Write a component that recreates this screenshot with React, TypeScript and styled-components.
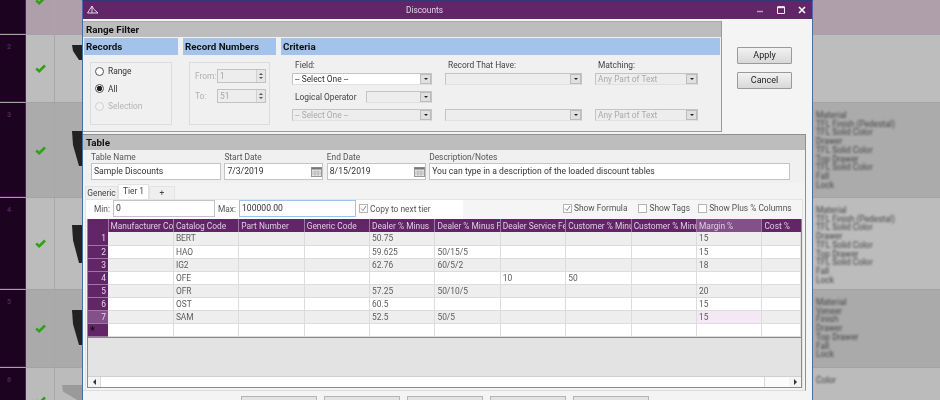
import * as React from "react";
import styled, { createGlobalStyle } from "styled-components";

const Global = createGlobalStyle`
    html, body {
        margin: 0;
        padding: 0;
        width: 940px;
        height: 400px;
        overflow: hidden;
        background: #b5b5b5;
    }
    * {
        box-sizing: border-box;
    }
`;

const font = `Roboto, "Noto Sans", "Liberation Sans", sans-serif`;

/* the app behind the dialog */
const Desktop = styled.div`
    position: relative;
    width: 940px;
    height: 400px;
    overflow: hidden;
    font-family: ${font};
`;

const Backdrop = styled.div`
    display: flex;
    flex-direction: column;
    margin-top: -34px;
    filter: blur(0.7px);
`;

const BgRow = styled.div<{ $h: number; $tone: string }>`
    display: grid;
    grid-template-columns: 26px 29px 27px 734px 1fr;
    height: ${(p) => p.$h}px;
    flex: none;
    background: ${(p) => p.$tone};
    border-bottom: 1px solid #a3a3a3;
`;

const BgNumber = styled.div`
    background: #1c0420;
    border-right: 1px solid #4a1f52;
    border-bottom: 1px solid #3c1444;
    color: #4e2558;
    font-size: 7px;
    font-weight: 700;
    padding: 8px 0 0 7px;
`;

const BgCheck = styled.div`
    display: flex;
    align-items: center;
    justify-content: center;
    border-right: 1px solid #a8a8a8;
`;

const BgThumb = styled.div<{ $top: number }>`
    display: flex;
    justify-content: flex-end;
    align-items: flex-start;
    padding-top: ${(p) => p.$top}px;
`;

const BgText = styled.div`
    grid-column: 5;
    padding: 8px 0 0 0;
    color: #444;
    font-size: 8.4px;
    line-height: 8.7px;
    filter: blur(0.9px);
`;

const Spacer = styled.div``;

/* dialog window */
const Dialog = styled.div`
    position: absolute;
    left: 82px;
    top: 0;
    width: 731px;
    height: 400px;
    overflow: hidden;
    display: flex;
    flex-direction: column;
    background: #f4f4f4;
    border-left: 1px solid #4c6da3;
    border-right: 1px solid #4c6da3;
    border-top: 1px solid #2c3a7c;
    filter: blur(0.35px);
`;

const TitleBar = styled.div`
    position: relative;
    flex: none;
    height: 18px;
    background: #622568;
    color: #e2d6e4;
    font-size: 8.3px;
    display: flex;
    align-items: center;
    justify-content: center;
    padding-right: 46px;
`;

const TitleLogo = styled.svg`
    position: absolute;
    left: 4px;
    top: 4px;
`;

const WindowControls = styled.div`
    position: absolute;
    right: 6px;
    top: 5px;
    display: flex;
    gap: 13px;
    align-items: center;
`;

const Body = styled.div`
    flex: 1;
    display: flex;
    flex-direction: column;
    padding-top: 1px;
    border-top: 1px solid #fff;
`;

const TopArea = styled.div`
    display: flex;
    flex: none;
`;

const RangePanel = styled.div`
    width: 639px;
    height: 111px;
    display: flex;
    flex-direction: column;
    border: 1px solid #9a9a9a;
    border-left: none;
    border-top-color: #a8a8a8;
    background: #f0f0f0;
`;

const PanelHeading = styled.div`
    flex: none;
    height: 15px;
    padding-left: 3px;
    background: #bdbdbd;
    color: #111;
    font-size: 9.8px;
    font-weight: 700;
    line-height: 15px;
`;

const RangeColumns = styled.div`
    flex: 1;
    display: grid;
    grid-template-columns: 94px 93px 1fr;
    gap: 5px;
    padding: 1px 1px 0 1px;
`;

const Section = styled.div`
    display: flex;
    flex-direction: column;
    min-width: 0;
`;

const SectionHead = styled.div`
    flex: none;
    height: 17px;
    padding-left: 2px;
    background: #a3c3ea;
    color: #111;
    font-size: 9.8px;
    font-weight: 700;
    line-height: 17px;
`;

const FieldSet = styled.div`
    margin: 7px 6px 0;
    height: 63px;
    border: 1px solid #dcdcdc;
    display: flex;
    flex-direction: column;
`;

const RadioList = styled(FieldSet)`
    padding: 2px 0 0 4px;
    gap: 5.5px;
`;

const RadioRow = styled.div<{ $off?: boolean }>`
    display: flex;
    align-items: center;
    gap: 4px;
    height: 12px;
    font-size: 8.4px;
    color: ${(p) => (p.$off ? "#b5b5b5" : "#333")};
`;

const Radio = styled.span<{ $on?: boolean; $off?: boolean }>`
    width: 9px;
    height: 9px;
    border-radius: 50%;
    flex: none;
    border: 1px solid ${(p) => (p.$off ? "#d0d0d0" : "#555")};
    background: ${(p) =>
        p.$on
            ? "radial-gradient(circle, #222 0 2.4px, #fff 3px)"
            : p.$off
            ? "#f2f2f2"
            : "#fff"};
`;

const SpinList = styled(FieldSet)`
    padding: 6px 0 0 5px;
    gap: 6px;
`;

const SpinRow = styled.div`
    display: flex;
    align-items: center;
    height: 14px;
    color: #b0b0b0;
    font-size: 8.4px;
`;

const SpinLabel = styled.span`
    width: 22px;
`;

const SpinBox = styled.div`
    width: 49px;
    height: 14px;
    border: 1px solid #c2c2c2;
    background: #ededed;
    color: #a8a8a8;
    font-size: 8.4px;
    line-height: 12px;
    padding-left: 2px;
    display: flex;
    justify-content: space-between;
`;

const SpinArrows = styled.div`
    width: 9px;
    display: flex;
    flex-direction: column;
    align-items: center;
    justify-content: center;
    gap: 2px;
    background: #e6e6e6;
    border-left: 1px solid #d0d0d0;
`;

const Arrow = styled.span<{ $dir: "up" | "down" | "left" | "right"; $c?: string }>`
    width: 0;
    height: 0;
    border-style: solid;
    border-color: transparent;
    ${(p) =>
        p.$dir === "up"
            ? `border-width: 0 2px 2px; border-bottom-color: ${p.$c || "#555"};`
            : p.$dir === "down"
            ? `border-width: 2px 2px 0; border-top-color: ${p.$c || "#555"};`
            : p.$dir === "left"
            ? `border-width: 3px 3px 3px 0; border-right-color: ${p.$c || "#333"};`
            : `border-width: 3px 0 3px 3px; border-left-color: ${p.$c || "#333"};`}
`;

const CriteriaGrid = styled.div`
    display: grid;
    grid-template-columns: 140px 137px 103px;
    column-gap: 13px;
    row-gap: 6px;
    padding: 4px 0 0 11px;
    grid-template-rows: 8px 12px 12px 12px;
    align-items: center;
`;

const SmallLabel = styled.span`
    font-size: 8.4px;
    color: #444;
    padding-left: 3px;
    white-space: nowrap;
`;

const ColumnLabel = styled(SmallLabel)`
    padding-top: 4px;
`;

const Select = styled.div<{ $white?: boolean; $w?: number }>`
    height: 12px;
    width: ${(p) => (p.$w ? `${p.$w}px` : "100%")};
    border: 1px solid #c4c4c4;
    border-bottom-color: #e0e0e0;
    background: ${(p) => (p.$white ? "#fff" : "#ededed")};
    color: ${(p) => (p.$white ? "#333" : "#aaa")};
    font-size: 8.4px;
    line-height: 10px;
    padding-left: 2px;
    display: flex;
    white-space: nowrap;
`;

const SelectButton = styled.span`
    width: 11px;
    flex: none;
    margin-left: auto;
    background: #e0e0e0;
    border: 1px solid #bcbcbc;
    display: flex;
    align-items: center;
    justify-content: center;
`;

const LogicalRow = styled.div`
    grid-column: 1;
    display: flex;
    justify-content: space-between;
    align-items: center;
`;

const ActionColumn = styled.div`
    display: flex;
    flex-direction: column;
    gap: 8px;
    padding: 26px 0 0 15px;
`;

const ActionButton = styled.div`
    width: 55px;
    height: 17px;
    border: 1px solid #9a9a9a;
    border-radius: 1px;
    background: linear-gradient(#f2f2f2, #d8d8d8);
    color: #222;
    font-size: 9px;
    line-height: 15px;
    text-align: center;
`;

const TablePanel = styled.div`
    flex: none;
    width: 723px;
    height: 257px;
    margin-top: 2px;
    display: flex;
    flex-direction: column;
    border: 1px solid #8f8f8f;
    border-left: none;
    border-bottom: 1px solid #dcdcdc;
    background: #f3f3f3;
`;

const FieldGroup = styled.div`
    flex: none;
    display: grid;
    grid-template-columns: 130px 99px 99px 361px;
    column-gap: 3.4px;
    padding: 2px 0 3px 8px;
    background: #f0f0f0;
`;

const FieldCol = styled.div`
    display: flex;
    flex-direction: column;
`;

const FieldLabel = styled.span`
    font-size: 8.4px;
    line-height: 11px;
    color: #555;
`;

const TextBox = styled.div`
    height: 17px;
    border: 1px solid #c4c4c4;
    background: #fff;
    color: #333;
    font-size: 8.6px;
    line-height: 15px;
    padding-left: 2px;
    display: flex;
    justify-content: space-between;
    align-items: center;
    white-space: nowrap;
`;

const TabStrip = styled.div`
    flex: none;
    display: flex;
    align-items: flex-end;
    height: 16px;
    padding-left: 2px;
    color: #444;
    font-size: 8.4px;
`;

const Tab = styled.div<{ $on?: boolean; $w: number }>`
    width: ${(p) => p.$w}px;
    height: ${(p) => (p.$on ? 15 : 13)}px;
    text-align: center;
    line-height: 13px;
    background: ${(p) => (p.$on ? "#fff" : "#efefef")};
    border: 1px solid #e2e2e2;
    border-bottom: none;
`;

const TabBody = styled.div`
    flex: 1;
    display: flex;
    flex-direction: column;
    min-height: 0;
    margin: 0 2px;
    padding-bottom: 2px;
    border: 1px solid #e3e3e3;
    border-bottom: none;
    background: #f5f5f5;
`;

const TierBar = styled.div`
    flex: none;
    height: 19px;
    display: flex;
    align-items: center;
    font-size: 8.4px;
    color: #555;
    white-space: nowrap;
`;

const TierFields = styled.div`
    display: flex;
    align-items: center;
    height: 100%;
    background: #fff;
    padding: 0 0 2px 8px;
    width: 377px;
`;

const TierLabel = styled.span<{ $w: number }>`
    width: ${(p) => p.$w}px;
    flex: none;
`;

const TierBox = styled(TextBox)<{ $w: number; $focus?: boolean }>`
    width: ${(p) => p.$w}px;
    margin-right: 3px;
    ${(p) => (p.$focus ? "border-color: #9cc4ea;" : "")}
`;

const CheckItem = styled.label<{ $left?: number }>`
    display: flex;
    align-items: center;
    gap: 2px;
    margin-left: ${(p) => p.$left || 0}px;
    margin-bottom: ${(p) => (p.$left ? 3 : 0)}px;
`;

const Box = styled.span`
    width: 9px;
    height: 9px;
    flex: none;
    border: 1px solid #b5b5b5;
    background: #fff;
    display: flex;
    align-items: center;
    justify-content: center;
`;

const GridFrame = styled.div`
    flex: 1;
    min-height: 0;
    display: flex;
    flex-direction: column;
    margin-left: 1px;
    border: 1px solid #8a8a8a;
    border-top: none;
    background: #e3e3e3;
`;

const DataTable = styled.table`
    flex: none;
    width: 100%;
    table-layout: fixed;
    border-collapse: collapse;
    font-size: 8.4px;
`;

const Head = styled.th<{ $on?: boolean; $w?: number }>`
    height: 13px;
    padding: 0 0 0 2px;
    ${(p) => (p.$w ? `width: ${p.$w}px;` : "")}
    background: ${(p) => (p.$on ? "#84508a" : "#622568")};
    color: #dfcfe2;
    font-size: 8.4px;
    font-weight: 400;
    text-align: left;
    overflow: hidden;
    white-space: nowrap;
    border-right: 1px solid #9a7a9f;
    &:last-child {
        border-right: none;
    }
`;

const RowHead = styled.td<{ $on?: boolean }>`
    height: 13px;
    padding: 0 2px 0 0;
    background: ${(p) => (p.$on ? "#84508a" : "#622568")};
    color: #e2d6e4;
    text-align: right;
    border-bottom: 1px solid #9a7a9f;
`;

const NewRowMark = styled.span`
    display: block;
    text-align: left;
    color: #111;
    padding: 2px 0 0 2px;
    line-height: 10px;
    font-size: 11px;
    font-weight: 700;
`;

const Cell = styled.td<{ $alt?: boolean; $pick?: boolean }>`
    height: 13px;
    padding: 0 0 0 2px;
    background: ${(p) => (p.$pick ? "#f5e8f5" : p.$alt ? "#eeeeee" : "#fff")};
    color: #5c5c5c;
    border: 1px solid #dcdcdc;
    border-top: none;
    border-left: none;
    overflow: hidden;
    white-space: nowrap;
`;

const GridEmpty = styled.div`
    flex: 1;
    border-top: 1px solid #8a8a8a;
`;

const ScrollBar = styled.div`
    flex: none;
    height: 11px;
    display: flex;
    background: #fff;
    border-top: 1px solid #cfcfcf;
`;

const ScrollEnd = styled.div`
    width: 12px;
    display: flex;
    align-items: center;
    justify-content: center;
    background: #f4f4f4;
`;

const ScrollThumb = styled.div`
    width: 665px;
    background: #fff;
    border-left: 1px solid #d8d8d8;
    border-right: 1px solid #d8d8d8;
`;

const ScrollTrack = styled.div`
    flex: 1;
    background: #fbfbfb;
`;

const BottomBar = styled.div`
    flex: none;
    display: flex;
    gap: 7px;
    padding: 5px 0 0 158px;
`;

const BottomButton = styled.div`
    width: 76px;
    height: 12px;
    border: 1px solid #b4b4b4;
    background: #e3e3e3;
`;

const Green = () => (
    <svg width="11" height="9" viewBox="0 0 11 9">
        <path d="M1.2 4.5 L4.2 7.2 L10 1.5" fill="none" stroke="#32a014" strokeWidth="2.6" />
    </svg>
);

const Thumb = ({ h, w = 10, fill = "#222" }: { h: number; w?: number; fill?: string }) => (
    <svg width={w} height={h} viewBox={`0 0 ${w} ${h}`}>
        <path d={`M0 0 L${w} 0 L${w} ${h} L${w - 3} ${h} L1 ${h * 0.4} Z`} fill={fill} />
    </svg>
);

const Tick = () => (
    <svg width="7" height="7" viewBox="0 0 7 7">
        <path d="M1 3.5 L3 5.5 L6 1" fill="none" stroke="#888" strokeWidth="1" />
    </svg>
);

const CalendarIcon = () => (
    <svg width="11" height="10" viewBox="0 0 11 10">
        <rect x="0.5" y="0.5" width="10" height="9" fill="#e8e8e8" stroke="#999" />
        <rect x="0.5" y="0.5" width="10" height="2" fill="#777" />
        <path d="M4 3v6M7 3v6M1 5h9M1 7h9" stroke="#aaa" strokeWidth="0.7" />
    </svg>
);

const SelectBox = ({ text, white, w }: { text?: string; white?: boolean; w?: number }) => (
    <Select $white={white} $w={w}>
        {text || ""}
        <SelectButton>
            <Arrow $dir="down" $c="#222" />
        </SelectButton>
    </Select>
);

const Spin = ({ label, value }: { label: string; value: string }) => (
    <SpinRow>
        <SpinLabel>{label}</SpinLabel>
        <SpinBox>
            {value}
            <SpinArrows>
                <Arrow $dir="up" />
                <Arrow $dir="down" />
            </SpinArrows>
        </SpinBox>
    </SpinRow>
);

const LATER_ROW = ["Material", "TFL Finish (Pedestal)", "TFL Solid Color", "Drawer", "TFL Solid Color", "Top Drawer", "TFL Solid Color", "Fall", "Lock"];

const BG_ROWS = [
    { id: 1, h: 69, tone: "#ae9fab", num: "", thumb: 0, thumbH: 0, lines: [] as string[] },
    { id: 2, h: 68, tone: "#bdbdbd", num: "2", thumb: 10, thumbH: 15, lines: [] },
    { id: 3, h: 95, tone: "#ababab", num: "3", thumb: 28, thumbH: 35, lines: LATER_ROW },
    { id: 4, h: 92, tone: "#bcbcbc", num: "4", thumb: 27, thumbH: 38, lines: LATER_ROW },
    {
        id: 5,
        h: 78,
        tone: "#aaaaaa",
        num: "5",
        thumb: 20,
        thumbH: 35,
        lines: ["Material", "Veneer", "Finish", "Drawer", "Top Drawer", "Fall", "Lock"],
    },
    { id: 6, h: 66, tone: "#bbbbbb", num: "6", thumb: 17, thumbH: 16, thumbW: 20, fill: "#9a9a9a", lines: ["Color"] },
];

const COLUMNS = [
    "Manufacturer Code",
    "Catalog Code",
    "Part Number",
    "Generic Code",
    "Dealer % Minus",
    "Dealer % Minus Formula",
    "Dealer Service Fee",
    "Customer % Minus",
    "Customer % Minus Formula",
    "Margin %",
    "Cost %",
];

const DATA: string[][] = [
    ["", "BERT", "", "", "50.75", "", "", "", "", "15", ""],
    ["", "HAO", "", "", "59.625", "50/15/5", "", "", "", "15", ""],
    ["", "IG2", "", "", "62.76", "60/5/2", "", "", "", "18", ""],
    ["", "OFE", "", "", "", "", "10", "50", "", "", ""],
    ["", "OFR", "", "", "57.25", "50/10/5", "", "", "", "20", ""],
    ["", "OST", "", "", "60.5", "", "", "", "", "15", ""],
    ["", "SAM", "", "", "52.5", "50/5", "", "", "", "15", ""],
    ["", "", "", "", "", "", "", "", "", "", ""],
];

export default function App() {
    return (
        <Desktop>
            <Global />
            <Backdrop>
                {BG_ROWS.map((r) => (
                    <BgRow key={r.id} $h={r.h} $tone={r.tone}>
                        <BgNumber>{r.num}</BgNumber>
                        <BgCheck>
                            <Green />
                        </BgCheck>
                        <BgThumb $top={r.thumb}>
                            {r.thumbH ? <Thumb h={r.thumbH} w={r.thumbW} fill={r.fill} /> : null}
                        </BgThumb>
                        <Spacer />
                        <BgText>
                            {r.lines.map((l, i) => (
                                <div key={i}>{l}</div>
                            ))}
                        </BgText>
                    </BgRow>
                ))}
            </Backdrop>

            <Dialog>
                <TitleBar>
                    <TitleLogo width="12" height="10" viewBox="0 0 12 10">
                        <path d="M0.5 8 L5 1 L6.5 4 L11 8 Z M5 1 L5 8" fill="none" stroke="#e4d4e6" strokeWidth="1" />
                    </TitleLogo>
                    Discounts
                    <WindowControls>
                        <svg width="8" height="8" viewBox="0 0 8 8">
                            <path d="M1 5.5h6" stroke="#b9a2bd" strokeWidth="1.4" />
                        </svg>
                        <svg width="8" height="8" viewBox="0 0 8 8">
                            <path d="M0.5 1h7v6.5h-7z" fill="none" stroke="#eee" strokeWidth="1" />
                            <path d="M0.5 1.2h7" stroke="#eee" strokeWidth="2" />
                        </svg>
                        <svg width="8" height="8" viewBox="0 0 8 8">
                            <path d="M1 1 L7 7 M7 1 L1 7" stroke="#fff" strokeWidth="1.6" />
                        </svg>
                    </WindowControls>
                </TitleBar>
                <Body>
                    <TopArea>
                        <RangePanel>
                            <PanelHeading>Range Filter</PanelHeading>
                            <RangeColumns>
                                <Section>
                                    <SectionHead>Records</SectionHead>
                                    <RadioList>
                                        <RadioRow>
                                            <Radio />
                                            Range
                                        </RadioRow>
                                        <RadioRow>
                                            <Radio $on />
                                            All
                                        </RadioRow>
                                        <RadioRow $off>
                                            <Radio $off />
                                            Selection
                                        </RadioRow>
                                    </RadioList>
                                </Section>
                                <Section>
                                    <SectionHead>Record Numbers</SectionHead>
                                    <SpinList>
                                        <Spin label="From:" value="1" />
                                        <Spin label="To:" value="51" />
                                    </SpinList>
                                </Section>
                                <Section>
                                    <SectionHead>Criteria</SectionHead>
                                    <CriteriaGrid>
                                        <ColumnLabel>Field:</ColumnLabel>
                                        <ColumnLabel>Record That Have:</ColumnLabel>
                                        <ColumnLabel>Matching:</ColumnLabel>
                                        <SelectBox text="-- Select One --" white />
                                        <SelectBox />
                                        <SelectBox text="Any Part of Text" />
                                        <LogicalRow>
                                            <SmallLabel>Logical Operator</SmallLabel>
                                            <SelectBox w={66} />
                                        </LogicalRow>
                                        <Spacer />
                                        <Spacer />
                                        <SelectBox text="-- Select One --" />
                                        <SelectBox />
                                        <SelectBox text="Any Part of Text" />
                                    </CriteriaGrid>
                                </Section>
                            </RangeColumns>
                        </RangePanel>
                        <ActionColumn>
                            <ActionButton>Apply</ActionButton>
                            <ActionButton>Cancel</ActionButton>
                        </ActionColumn>
                    </TopArea>

                    <TablePanel>
                        <PanelHeading>Table</PanelHeading>
                        <FieldGroup>
                            <FieldCol>
                                <FieldLabel>Table Name</FieldLabel>
                                <TextBox>Sample Discounts</TextBox>
                            </FieldCol>
                            <FieldCol>
                                <FieldLabel>Start Date</FieldLabel>
                                <TextBox>
                                    7/3/2019
                                    <CalendarIcon />
                                </TextBox>
                            </FieldCol>
                            <FieldCol>
                                <FieldLabel>End Date</FieldLabel>
                                <TextBox>
                                    8/15/2019
                                    <CalendarIcon />
                                </TextBox>
                            </FieldCol>
                            <FieldCol>
                                <FieldLabel>Description/Notes</FieldLabel>
                                <TextBox>You can type in a description of the loaded discount tables</TextBox>
                            </FieldCol>
                        </FieldGroup>
                        <TabStrip>
                            <Tab $w={33}>Generic</Tab>
                            <Tab $w={31} $on>
                                Tier 1
                            </Tab>
                            <Tab $w={26}>+</Tab>
                        </TabStrip>
                        <TabBody>
                            <TierBar>
                                <TierFields>
                                    <TierLabel $w={19}>Min:</TierLabel>
                                    <TierBox $w={102}>0</TierBox>
                                    <TierLabel $w={21}>Max:</TierLabel>
                                    <TierBox $w={117} $focus>
                                        100000.00
                                    </TierBox>
                                    <CheckItem>
                                        <Box>
                                            <Tick />
                                        </Box>
                                        Copy to next tier
                                    </CheckItem>
                                </TierFields>
                                <CheckItem $left={100}>
                                    <Box>
                                        <Tick />
                                    </Box>
                                    Show Formula
                                </CheckItem>
                                <CheckItem $left={11}>
                                    <Box />
                                    Show Tags
                                </CheckItem>
                                <CheckItem $left={8}>
                                    <Box />
                                    Show Plus % Columns
                                </CheckItem>
                            </TierBar>
                            <GridFrame>
                                <DataTable>
                                    <thead>
                                        <tr>
                                            <Head $w={20} />
                                            {COLUMNS.map((c) => (
                                                <Head key={c} $on={c === "Margin %"} $w={c === "Cost %" ? 39 : 65.4}>
                                                    {c}
                                                </Head>
                                            ))}
                                        </tr>
                                    </thead>
                                    <tbody>
                                        {DATA.map((row, i) => (
                                            <tr key={i}>
                                                <RowHead $on={i === 6}>
                                                    {i < 7 ? i + 1 : <NewRowMark>*</NewRowMark>}
                                                </RowHead>
                                                {row.map((v, j) => (
                                                    <Cell key={j} $alt={i % 2 === 0 && i < 7} $pick={i === 6 && j === 9}>
                                                        {v}
                                                    </Cell>
                                                ))}
                                            </tr>
                                        ))}
                                    </tbody>
                                </DataTable>
                                <GridEmpty />
                                <ScrollBar>
                                    <ScrollEnd>
                                        <Arrow $dir="left" />
                                    </ScrollEnd>
                                    <ScrollThumb />
                                    <ScrollTrack />
                                    <ScrollEnd>
                                        <Arrow $dir="right" />
                                    </ScrollEnd>
                                </ScrollBar>
                            </GridFrame>
                        </TabBody>
                    </TablePanel>
                    <BottomBar>
                        <BottomButton />
                        <BottomButton />
                        <BottomButton />
                        <BottomButton />
                        <BottomButton />
                    </BottomBar>
                </Body>
            </Dialog>
        </Desktop>
    );
}
